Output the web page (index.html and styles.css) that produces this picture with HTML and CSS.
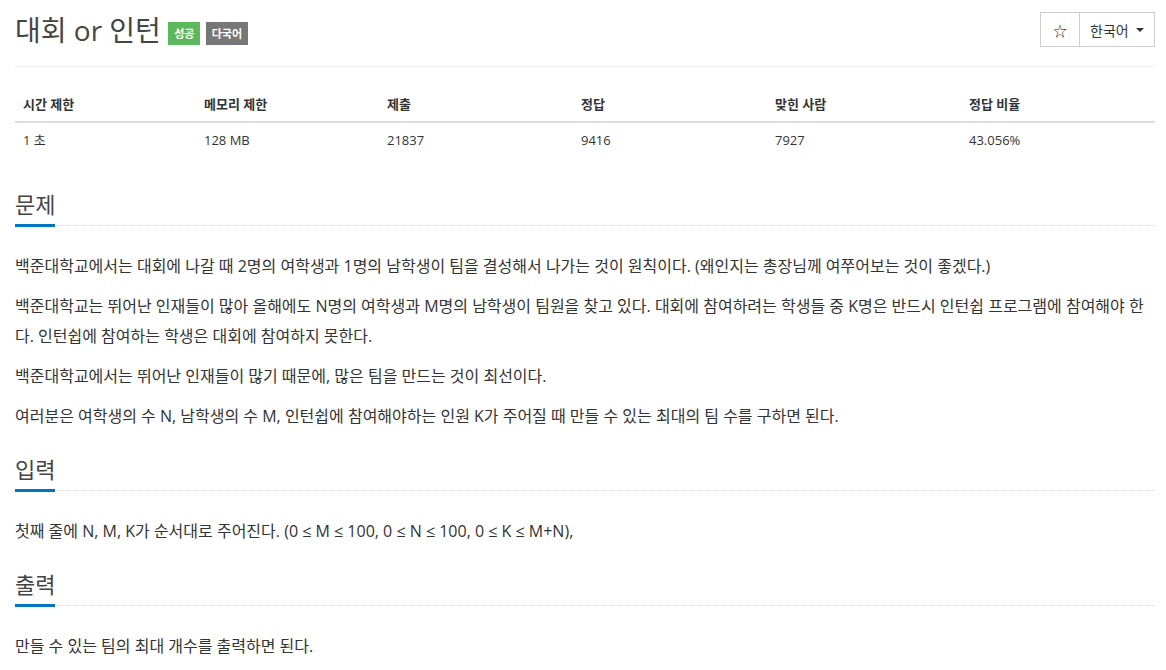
FILE: index.html
```html
<!DOCTYPE html>
<html lang="ko">
<head>
    <meta charset="UTF-8">
    <meta name="viewport" content="width=device-width, initial-scale=1.0">
    <title>대회 or 인턴</title>
    <link rel="stylesheet" href="styles.css">
</head>
<body>
    <div class="container">
        <div class="page-header">
            <h1 class="problem-title">대회 or 인턴
                <span class="label label-success">성공</span>
                <span class="label label-default">다국어</span>
            </h1>
            <div class="btn-group">
                <button class="btn btn-star">&#9734;</button>
                <button class="btn btn-lang">한국어 <span class="caret"></span></button>
            </div>
        </div>

        <table class="problem-info">
            <thead>
                <tr>
                    <th class="col-time">시간 제한</th>
                    <th class="col-memory">메모리 제한</th>
                    <th class="col-wide">제출</th>
                    <th class="col-wide">정답</th>
                    <th class="col-wide">맞힌 사람</th>
                    <th>정답 비율</th>
                </tr>
            </thead>
            <tbody>
                <tr>
                    <td>1 초</td>
                    <td>128 MB</td>
                    <td>21837</td>
                    <td>9416</td>
                    <td>7927</td>
                    <td>43.056%</td>
                </tr>
            </tbody>
        </table>

        <section class="problem-section first">
            <div class="headline">
                <h2>문제</h2>
            </div>
            <div class="problem-text">
                <p>백준대학교에서는 대회에 나갈 때 2명의 여학생과 1명의 남학생이 팀을 결성해서 나가는 것이 원칙이다. (왜인지는 총장님께 여쭈어보는 것이 좋겠다.)</p>
                <p>백준대학교는 뛰어난 인재들이 많아 올해에도 N명의 여학생과 M명의 남학생이 팀원을 찾고 있다. 대회에 참여하려는 학생들 중 K명은 반드시 인턴쉽 프로그램에 참여해야 한다. 인턴쉽에 참여하는 학생은 대회에 참여하지 못한다.</p>
                <p>백준대학교에서는 뛰어난 인재들이 많기 때문에, 많은 팀을 만드는 것이 최선이다.</p>
                <p>여러분은 여학생의 수 N, 남학생의 수 M, 인턴쉽에 참여해야하는 인원 K가 주어질 때 만들 수 있는 최대의 팀 수를 구하면 된다.</p>
            </div>
        </section>

        <section class="problem-section">
            <div class="headline">
                <h2>입력</h2>
            </div>
            <div class="problem-text">
                <p>첫째 줄에 N, M, K가 순서대로 주어진다. (0 ≤ M ≤ 100, 0 ≤ N ≤ 100, 0 ≤ K ≤ M+N),</p>
            </div>
        </section>

        <section class="problem-section">
            <div class="headline">
                <h2>출력</h2>
            </div>
            <div class="problem-text">
                <p>만들 수 있는 팀의 최대 개수를 출력하면 된다.</p>
            </div>
        </section>
    </div>
</body>
</html>
```

FILE: styles.css
```css
body {
    font-family: "Open Sans", "Noto Sans CJK KR", sans-serif;
    margin: 0;
    padding: 0;
    background-color: #fff;
    color: #333;
    font-size: 14px;
}
.container {
    width: 1140px;
    padding-left: 15px;
}
.page-header {
    display: flex;
    justify-content: space-between;
    align-items: flex-start;
    padding-top: 12px;
    height: 54px;
    border-bottom: 1px solid #eee;
}
.problem-title {
    margin: 2px 0 0;
    font-size: 28px;
    font-weight: normal;
    line-height: 33px;
    color: #444;
}
.label {
    display: inline-block;
    vertical-align: 3px;
    font-size: 11px;
    font-weight: bold;
    color: #fff;
    line-height: 23px;
    padding: 0 6px;
}
.label-success {
    background-color: #5cb85c;
}
.label-default {
    background-color: #777;
    margin-left: -2px;
}
.btn-group {
    display: flex;
}
.btn {
    font-family: inherit;
    font-size: 14px;
    color: #333;
    background: #fff;
    border: 1px solid #ccc;
    height: 35px;
    padding: 0 12px;
    cursor: pointer;
}
.btn-star {
    width: 40px;
    padding: 0;
    font-size: 14px;
}
.btn-lang {
    width: 76px;
    margin-left: -1px;
    display: flex;
    align-items: center;
    justify-content: space-between;
    padding: 0 10px 0 10px;
}
.caret {
    display: inline-block;
    width: 0;
    height: 0;
    border-top: 4px solid #333;
    border-left: 4px solid transparent;
    border-right: 4px solid transparent;
}
.problem-info {
    width: 1140px;
    margin-top: 20px;
    border-collapse: collapse;
    table-layout: fixed;
    font-size: 13px;
}
.problem-info th,
.problem-info td {
    text-align: left;
    padding: 8px;
    line-height: 18px;
}
.problem-info th {
    font-weight: bold;
    border-bottom: 2px solid #ddd;
}
.col-time {
    width: 165px;
}
.col-memory {
    width: 167px;
}
.col-wide {
    width: 178px;
}
.problem-section {
    margin-top: 26px;
}
.problem-section.first {
    margin-top: 35px;
}
.headline {
    border-bottom: 1px dotted #ddd;
    margin-bottom: 25px;
}
.headline h2 {
    display: inline-block;
    margin: 0 0 -2px;
    padding-bottom: 8px;
    font-size: 22px;
    font-weight: normal;
    line-height: 24px;
    color: #444;
    border-bottom: 3px solid #0076c0;
}
.problem-text {
    font-size: 16px;
    line-height: 30px;
    color: #333;
}
.problem-text p {
    margin: 0 0 10px;
}
```
